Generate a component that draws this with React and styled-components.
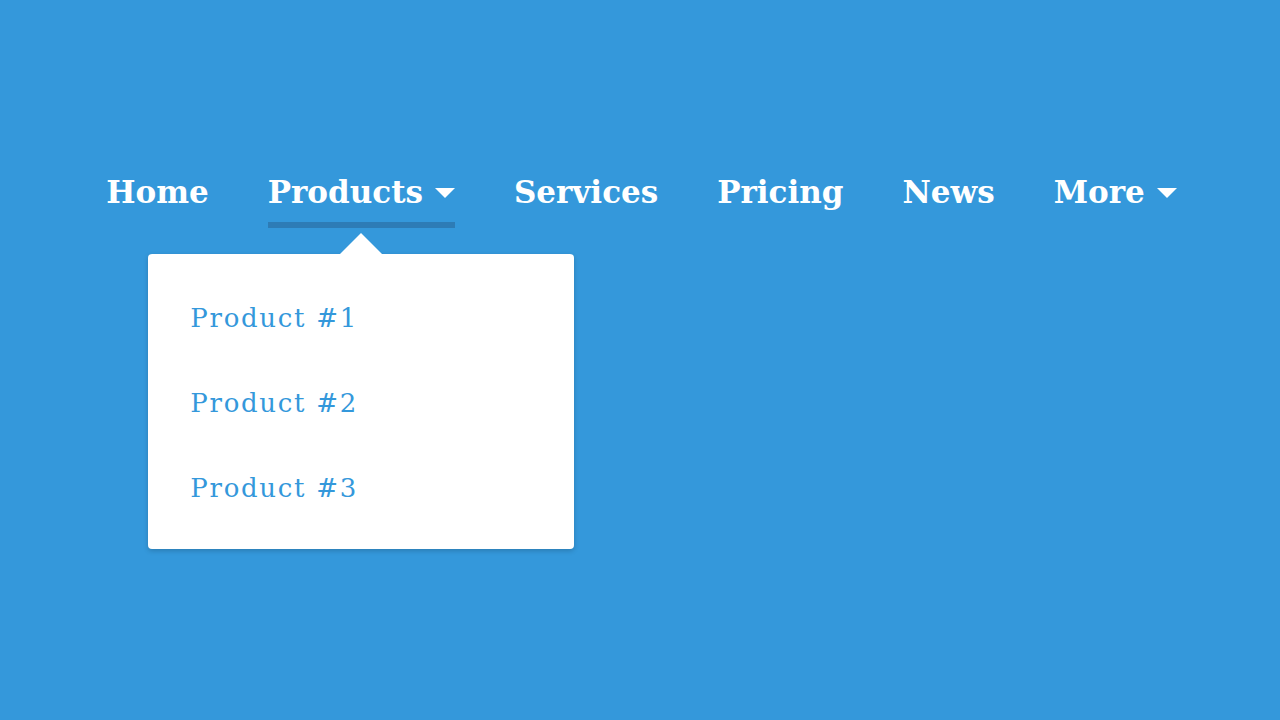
import React from 'react';
import styled, { createGlobalStyle } from 'styled-components';

const GlobalStyle = createGlobalStyle`
  html, body {
    margin: 0;
    padding: 0;
    height: 100%;
    background: #3498db;
  }
  body {
    font-family: "DejaVu Serif", Georgia, serif;
  }
`;

const Page = styled.div`
  width: 100%;
  min-height: 720px;
  background: #3498db;
  padding-top: 174px;
  box-sizing: border-box;
`;

const Menu = styled.ul`
  display: flex;
  justify-content: center;
  gap: 59px;
  list-style: none;
  margin: 0;
  padding: 0 0 0 3px;
`;

const MenuItem = styled.li`
  position: relative;
`;

const MenuLink = styled.a`
  display: flex;
  align-items: center;
  height: 36px;
  padding-bottom: 12px;
  border-bottom: 6px solid ${(p) => (p.$active ? '#2d7cb6' : 'transparent')};
  color: #ffffff;
  font-size: 31px;
  font-weight: bold;
  text-decoration: none;
  cursor: pointer;
`;

const Caret = styled.svg`
  width: 20px;
  height: 10px;
  margin-left: 12px;
  margin-top: 2px;
`;

const Dropdown = styled.ul`
  position: absolute;
  top: calc(100% + 26px);
  left: 50%;
  transform: translateX(-50%);
  width: 426px;
  margin: 0;
  padding: 22px 0 18px;
  list-style: none;
  background: #ffffff;
  border-radius: 4px;
  box-shadow: 0 2px 5px rgba(0, 0, 0, 0.18);

  &::before {
    content: '';
    position: absolute;
    top: -21px;
    left: 50%;
    transform: translateX(-50%);
    width: 0;
    height: 0;
    border-left: 21px solid transparent;
    border-right: 21px solid transparent;
    border-bottom: 21px solid #ffffff;
  }
`;

const DropdownItem = styled.li`
  height: 85px;
  line-height: 85px;
  padding-left: 42px;
  color: #3498db;
  font-size: 26px;
  letter-spacing: 1.7px;
`;

const CaretIcon = () => (
  <Caret viewBox="0 0 20 10">
    <path d="M0 0 H20 L10 10 Z" fill="#ffffff" />
  </Caret>
);

const items = [
  { label: 'Home' },
  { label: 'Products', caret: true, active: true, sub: ['Product #1', 'Product #2', 'Product #3'] },
  { label: 'Services' },
  { label: 'Pricing' },
  { label: 'News' },
  { label: 'More', caret: true },
];

const App = () => (
  <Page>
    <GlobalStyle />
    <Menu>
      {items.map((item) => (
        <MenuItem key={item.label}>
          <MenuLink $active={item.active}>
            {item.label}
            {item.caret && <CaretIcon />}
          </MenuLink>
          {item.sub && (
            <Dropdown>
              {item.sub.map((s) => (
                <DropdownItem key={s}>{s}</DropdownItem>
              ))}
            </Dropdown>
          )}
        </MenuItem>
      ))}
    </Menu>
  </Page>
);

export default App;
